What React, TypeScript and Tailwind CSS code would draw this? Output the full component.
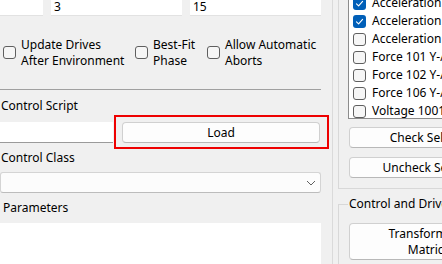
import React from 'react'

const font = { fontFamily: '"Noto Sans", "Open Sans", sans-serif' }

function Box({ checked = false }: { checked?: boolean }) {
  return checked ? (
    <span className="flex h-[13px] w-[13px] shrink-0 items-center justify-center rounded-[3px] bg-[#005fb8]">
      <svg width="9" height="9" viewBox="0 0 9 9" fill="none">
        <path d="M1.5 4.8 3.6 6.8 7.6 2.3" stroke="white" strokeWidth="1.1" strokeLinecap="round" strokeLinejoin="round" />
      </svg>
    </span>
  ) : (
    <span className="h-[13px] w-[13px] shrink-0 rounded-[3px] border border-[#5f5f5f] bg-[#f6f6f6]" />
  )
}

function Option({ lines, className }: { lines: string[]; className: string }) {
  return (
    <div className={'flex items-center ' + className}>
      <Box />
      <div className="ml-[5px] leading-[16px]">
        {lines.map((l) => (
          <div key={l}>{l}</div>
        ))}
      </div>
    </div>
  )
}

const channels = [
  { name: 'Acceleration 1', checked: true },
  { name: 'Acceleration 2', checked: true },
  { name: 'Acceleration 3', checked: false },
  { name: 'Force 101 Y-Axis', checked: false },
  { name: 'Force 102 Y-Axis', checked: false },
  { name: 'Force 106 Y-Axis', checked: false },
  { name: 'Voltage 1001', checked: false },
]

const btn = 'rounded-[4px] border border-[#d0d0d0] border-b-[#b8b8b8] bg-[#fdfdfd] text-center'

export default function App() {
  return (
    <div style={font} className="flex h-[264px] w-[442px] overflow-hidden bg-[#f0f0f0] text-[12px] text-black">
      {/* left column */}
      <div className="flex w-[321px] shrink-0 flex-col">
        <div className="flex h-[16px] gap-[8px]">
          <div className="w-[43px] border-b border-[#e2e2e2] bg-white" />
          <div className="w-[131px] border-b border-[#e2e2e2] bg-white pl-[3px] leading-[14px]">3</div>
          <div className="w-[131px] border-b border-[#e2e2e2] bg-white pl-[3px] leading-[14px]">15</div>
        </div>

        <div className="flex h-[73px] items-center">
          <Option lines={['Update Drives', 'After Environment']} className="ml-[3px] w-[132px]" />
          <Option lines={['Best-Fit', 'Phase']} className="w-[72px]" />
          <Option lines={['Allow Automatic', 'Aborts']} className="" />
        </div>

        <div className="h-px bg-[#a0a0a0]" />

        <div className="flex h-[32px] items-center pl-px leading-[16px]">Control Script</div>

        <div className="flex h-[21px] items-start">
          <div className="h-[21px] w-[113px] border-b border-[#9a9a9a] bg-white" />
          <div className="relative ml-[9px] flex-1">
            <div className={btn + ' h-[21px] w-[198px] leading-[19px]'}>Load</div>
            <div className="absolute -bottom-[6px] -left-[8px] -right-[8px] -top-[7px] border-2 border-[#ee0000]" />
          </div>
        </div>

        <div className="flex h-[29px] items-center pl-px leading-[16px]">Control Class</div>

        <div className="flex h-[21px] items-center justify-end rounded-[3px] border border-[#d4d4d4] border-b-[#bcbcbc] bg-[#fcfcfc] pr-[4px]">
          <svg width="10" height="6" viewBox="0 0 10 6" fill="none">
            <path d="M1 1l4 4 4-4" stroke="#606060" strokeWidth="1" />
          </svg>
        </div>

        <div className="flex h-[30px] items-center pl-[3px] leading-[16px]">Parameters</div>

        <div className="flex-1 bg-white" />
      </div>

      {/* splitter */}
      <div className="ml-[11px] w-px shrink-0 bg-[#dadada]" />

      {/* right column */}
      <div className="ml-[5px] flex w-[200px] shrink-0 flex-col">
        <div className="flex h-[189px] shrink-0 flex-col border-b border-l border-[#d8d8d8] pl-[9px]">
          <div className="h-[119px] overflow-hidden border-b border-l border-[#8c8c8c] bg-white">
            <div className="-mt-[6px] flex flex-col">
              {channels.map((c) => (
                <div key={c.name} className="flex h-[18px] items-center whitespace-nowrap pl-[4px]">
                  <Box checked={c.checked} />
                  <span className="ml-[6px] leading-[16px]">{c.name}</span>
                </div>
              ))}
            </div>
          </div>
          <div className={btn + ' mt-[8px] ml-px h-[21px] w-[166px] shrink-0 leading-[19px]'}>Check Selected</div>
          <div className={btn + ' mt-[9px] ml-px h-[21px] w-[166px] shrink-0 leading-[19px]'}>Uncheck Selected</div>
        </div>

        <fieldset className="mt-[7px] flex-1 border-l border-t border-[#d8d8d8]">
          <legend className="ml-[9px] px-px leading-[16px]">Control and Drive</legend>
          <div className={btn + ' ml-[10px] mt-[11px] flex h-[37px] w-[166px] flex-col justify-center leading-[16px]'}>
            <div>Transformation</div>
            <div>Matrices</div>
          </div>
        </fieldset>
      </div>
    </div>
  )
}
